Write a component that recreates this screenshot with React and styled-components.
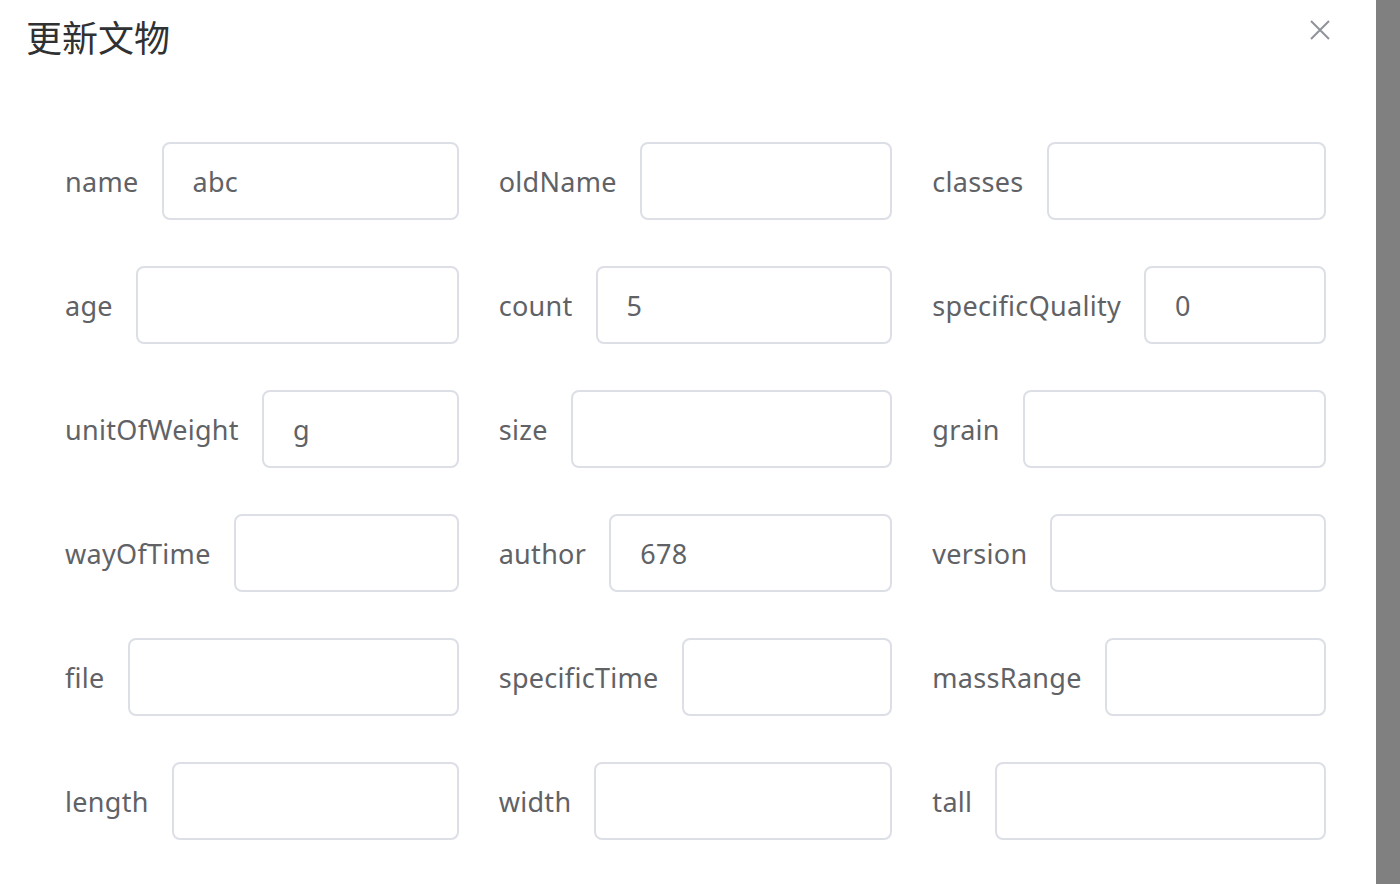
import React from "react";
import styled, { createGlobalStyle } from "styled-components";

const Global = createGlobalStyle`
  html, body { margin: 0; padding: 0; }
  body {
    background: #808080;
    font-family: "Noto Sans", "Noto Sans CJK SC", sans-serif;
  }
`;

const Page = styled.div`
  display: flex;
  width: 1400px;
  height: 884px;
  overflow: hidden;
`;

const Dialog = styled.div`
  width: 1376px;
  height: 884px;
  background: #fff;
  box-sizing: border-box;
  position: relative;
`;

const Header = styled.div`
  display: flex;
  align-items: flex-start;
  padding: 14px 0 0 26px;
`;

const Title = styled.h2`
  margin: 0;
  font-family: "Noto Sans CJK SC", sans-serif;
  font-weight: 400;
  font-size: 36px;
  line-height: 44px;
  color: #303133;
`;

const Close = styled.button`
  position: absolute;
  top: 20px;
  right: 46px;
  width: 20px;
  height: 20px;
  padding: 0;
  border: 0;
  background: none;
  cursor: pointer;
`;

const Form = styled.div`
  display: grid;
  grid-template-columns: repeat(3, minmax(0, 1fr));
  column-gap: 41px;
  row-gap: 46px;
  padding: 84px 50px 0 66px;
`;

const Item = styled.div`
  display: flex;
  align-items: center;
  min-width: 0;
  height: 78px;
`;

const Label = styled.label`
  font-size: 27px;
  letter-spacing: 0.3px;
  color: #606266;
  padding-right: 23px;
  margin-left: -1px;
  white-space: nowrap;
`;

const Input = styled.input`
  flex: 1;
  width: 0;
  min-width: 0;
  height: 78px;
  box-sizing: border-box;
  border: 2px solid #dcdfe6;
  border-radius: 8px;
  padding: 0 29px;
  font-family: "Noto Sans", sans-serif;
  font-size: 27px;
  letter-spacing: 0.3px;
  color: #606266;
  outline: none;
  background: #fff;
`;

const fields = [
  ["name", "abc"], ["oldName", ""], ["classes", ""],
  ["age", ""], ["count", "5"], ["specificQuality", "0"],
  ["unitOfWeight", "g"], ["size", ""], ["grain", ""],
  ["wayOfTime", ""], ["author", "678"], ["version", ""],
  ["file", ""], ["specificTime", ""], ["massRange", ""],
  ["length", ""], ["width", ""], ["tall", ""],
];

export default function App() {
  return (
    <Page>
      <Global />
      <Dialog>
        <Header>
          <Title>更新文物</Title>
        </Header>
        <Close aria-label="close">
          <svg width="20" height="20" viewBox="0 0 20 20">
            <path d="M1 1 L19 19 M19 1 L1 19" stroke="#909399" strokeWidth="2" fill="none" />
          </svg>
        </Close>
        <Form>
          {fields.map(([label, value]) => (
            <Item key={label}>
              <Label>{label}</Label>
              <Input defaultValue={value} />
            </Item>
          ))}
        </Form>
      </Dialog>
    </Page>
  );
}
